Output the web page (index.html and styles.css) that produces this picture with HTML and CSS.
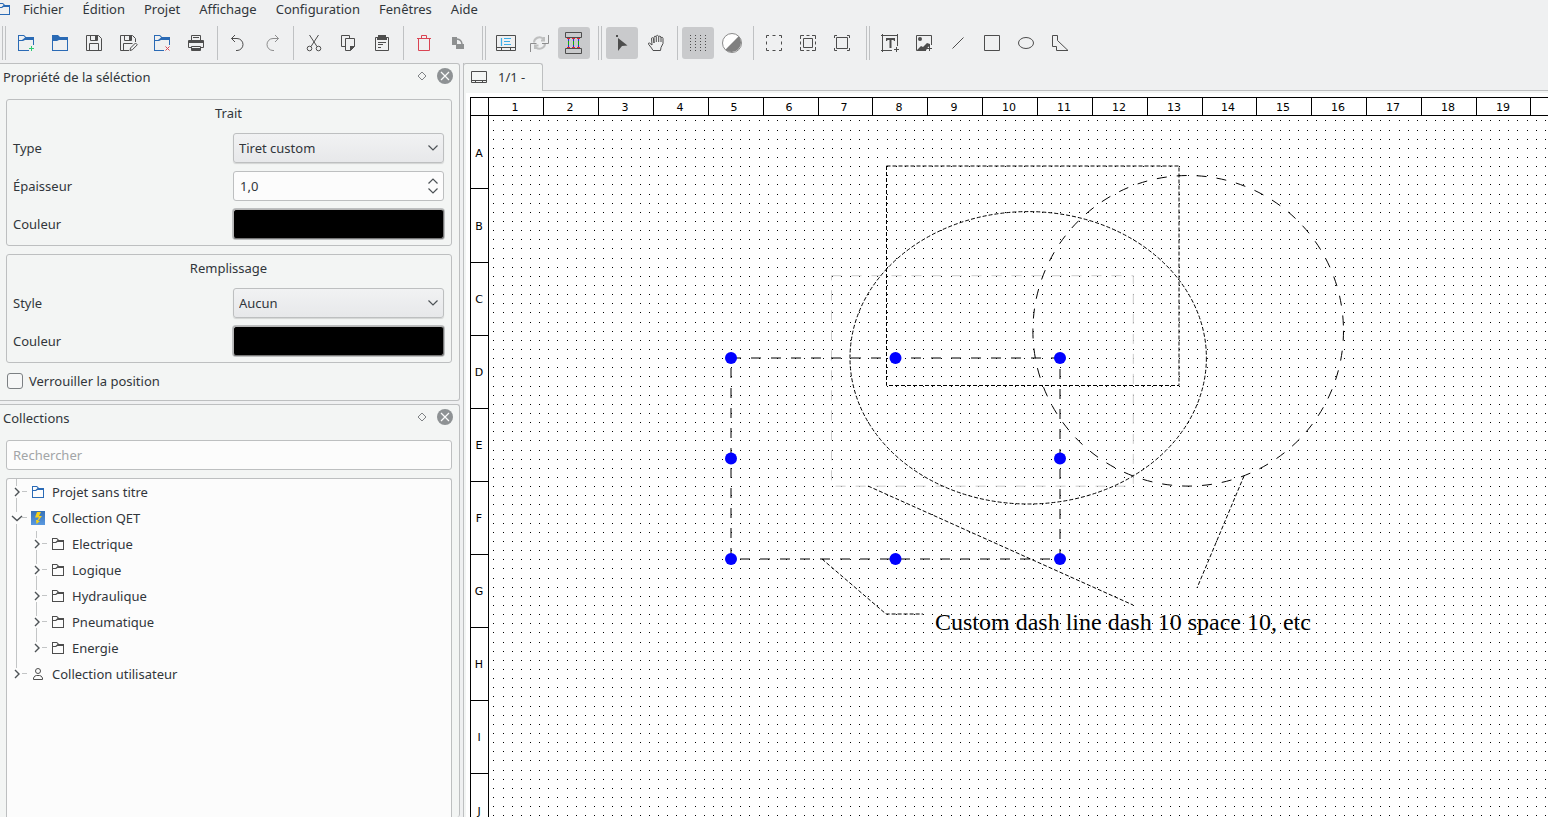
FILE: index.html
```html
<!DOCTYPE html>
<html lang="fr">
<head>
<meta charset="utf-8">
<title>QElectroTech</title>
<link rel="stylesheet" href="styles.css">
</head>
<body>
<svg class="defs" aria-hidden="true">
  <symbol id="folder16" viewBox="0 0 16 16"><path fill="currentColor" fill-rule="evenodd" d="M2 2v12h12V4H9L7 2zM3 3h3.600l1 1L5.500 6H3zM3 7h3l1.500-1H13v7H3z"/></symbol>
  <symbol id="fold-r" viewBox="0 0 20 26"><path d="M8 9l4 4-4 4" fill="none" stroke="#4d5256" stroke-width="1.400"/></symbol>
  <symbol id="fold-d" viewBox="0 0 20 26"><path d="M5 11l5 4.500 5-4.500" fill="none" stroke="#4d5256" stroke-width="1.400"/></symbol>
  <symbol id="branch" viewBox="0 0 20 26"><path d="M9.500 0v7M9.500 19v7M15 12.500h5" fill="none" stroke="#c3c5c6"/></symbol>
  <symbol id="branch-end" viewBox="0 0 20 26"><path d="M9.500 0v7M15 12.500h5" fill="none" stroke="#c3c5c6"/></symbol>
  <symbol id="chevron" viewBox="0 0 10 6"><path d="M.5.5L5 5 9.500.5" fill="none" stroke="#4d5256" stroke-width="1.200"/></symbol>
  <symbol id="float" viewBox="0 0 16 16"><path d="M8 4l4 4-4 4-4-4z" fill="none" stroke="#808386"/></symbol>
  <symbol id="close" viewBox="0 0 16 16"><circle cx="8" cy="8" r="8" fill="#8e9294"/><path d="M4 4l8 8M12 4l-8 8" stroke="#fcfcfc" stroke-width="1.200"/></symbol>
</svg>

<header>
  <nav class="menubar">
    <svg class="i16 blue app-icon"><use href="#folder16"/></svg>
    <button>Fichier</button><button>Édition</button><button>Projet</button><button>Affichage</button><button>Configuration</button><button>Fenêtres</button><button>Aide</button>
  </nav>
  <div class="toolbar" role="toolbar">
    <span class="grip"></span>
    <button aria-label="Nouveau"><svg viewBox="0 0 22 22"><path fill="#2a6ab5" fill-rule="evenodd" d="M3 3v16h11v-1H4V9h4l2-1h8v5h1V5h-8L9 3zM4 4h4.600l1.500 1.500L7 8H4z"/><path d="M16.500 14v5M14 16.500h5" stroke="#2ecc71"/></svg></button>
    <button aria-label="Ouvrir"><svg viewBox="0 0 22 22"><path fill="#2a6ab5" fill-rule="evenodd" d="M3 3v16h16V5h-8L9 3zM4 9h4l2-1h8v10H4z"/></svg></button>
    <button aria-label="Enregistrer"><svg viewBox="0 0 22 22"><path class="ln" d="M3.500 3.500h12l3 3v12h-15zM7.500 3.500v5h7v-5M6.500 18.500v-7h9v7"/><path class="fl" d="M12 4h2v4h-2z"/></svg></button>
    <button aria-label="Enregistrer sous"><svg viewBox="0 0 22 22"><path class="ln" d="M12 18.500H3.500v-15h12l3 3V10M7.500 3.500v5h7v-5M6.500 18.500v-7h9"/><path class="fl" d="M12 4h2v4h-2z"/><path class="ln" d="M13 18.500l.5-2.500 5-5 1.800 1.800-5 5z"/></svg></button>
    <button aria-label="Fermer"><svg viewBox="0 0 22 22"><path fill="#2a6ab5" fill-rule="evenodd" d="M3 3v16h10v-1H4V9h4l2-1h8v5h1V5h-8L9 3zM4 4h4.600l1.500 1.500L7 8H4z"/><path d="M14.500 14.500l4 4M18.500 14.500l-4 4" stroke="#da4453"/></svg></button>
    <button aria-label="Imprimer"><svg viewBox="0 0 22 22"><path class="ln" d="M6.500 8V3.500h9V8M6 15.500H3.500v-7h15v7H16M6.500 14.500h9v4h-9zM8 5.500h6"/><path class="fl" d="M3 9h16v2H3zM7 16h8v3H7z"/></svg></button>
    <span class="sep"></span>
    <button aria-label="Annuler"><svg viewBox="0 0 22 22"><path class="ln" d="M8 3L4.500 6.500 8 10M4.500 6.500h5.500a6 6 0 0 1 0 12H9"/></svg></button>
    <button class="off" aria-label="Refaire" disabled><svg viewBox="0 0 22 22"><path class="ln" d="M14 3l3.500 3.500L14 10M17.500 6.500H12a6 6 0 0 0 0 12h1"/></svg></button>
    <span class="sep"></span>
    <button aria-label="Couper"><svg viewBox="0 0 22 22"><path class="ln" d="M6.500 3l7.500 11.500M15.500 3L8 14.500"/><circle class="ln" cx="6.500" cy="16.500" r="2.300"/><circle class="ln" cx="15.500" cy="16.500" r="2.300"/></svg></button>
    <button aria-label="Copier"><svg viewBox="0 0 22 22"><path class="ln" d="M8 14.500H4.500v-11h8V6M8.500 6.500h9v8l-4 4h-5z"/><path class="fl" d="M13 14h5l-5 5z"/></svg></button>
    <button aria-label="Coller"><svg viewBox="0 0 22 22"><path class="ln" d="M4.500 5.500h13v13h-13zM7 10.500h8M7 12.500h5M7 15.500h3"/><path class="fl" d="M6 5h1V3h8v2h1v3H6z"/></svg></button>
    <span class="sep"></span>
    <button aria-label="Supprimer"><svg viewBox="0 0 22 22"><path d="M5.500 7v11.500h11V7M4 6.500h14M8.500 6V3.500h5V6" fill="none" stroke="#da4453"/></svg></button>
    <button aria-label="Pivoter" disabled><svg viewBox="0 0 22 22"><path fill="#8e9091" d="M5 5h5v8H5zM9 12h8v5H9z"/><path d="M10 7q4.500.5 5 5" fill="none" stroke="#8e9091" stroke-width="1.500"/></svg></button>
    <span class="grip"></span>
    <button aria-label="Cartouche"><svg viewBox="0 0 22 22"><path class="ln" d="M1.500 3.500h19v15h-19zM2 15.500h18M6.500 16v3M15.500 16v3"/><path d="M6.500 6v8M9 6.500h7M9 9.500h6M9 12.500h7" fill="none" stroke="#3daee9" stroke-width="1.200"/></svg></button>
    <button class="off" aria-label="Réinitialiser les conducteurs" disabled><svg viewBox="0 0 22 22"><path class="ln" d="M1.500 20v-8.500h6M13 11.500h6.500V3"/><path class="ln thick" d="M5 10.500a5.500 5.500 0 0 1 9-4l1 1.500M12 8.500h3V5M16 11a5.500 5.500 0 0 1-9 4.500l-1-1.500M9.500 13.500H6V17"/></svg></button>
    <button class="on" aria-label="Conducteurs automatiques" aria-pressed="true"><svg viewBox="0 0 22 22"><path class="ln" d="M2.500.5h16v5h-16zM2.500 16.500h16v5h-16z"/><path d="M5.500 6v10M10.500 6v10M15.500 6v10" stroke="#12a512"/><path d="M4 6.500h3M9 6.500h3M14 6.500h3M4 15.500h3M9 15.500h3M14 15.500h3" stroke="#e8262b"/><path d="M5.500 7v2M10.500 7v2M15.500 7v2M5.500 13v2M10.500 13v2M15.500 13v2" stroke="#2424e8"/></svg></button>
    <span class="grip"></span>
    <button class="on" aria-label="Sélection" aria-pressed="true"><svg viewBox="0 0 22 22"><path class="fl" d="M7 6l9.500 7.500-5.500.5-4 5zM5 3h2v2H5z"/></svg></button>
    <button aria-label="Déplacer"><svg viewBox="0 0 22 22"><path class="ln" d="M8 18.500h7.500l.5-3 2-4V6.500q-.2-1.500-1.500-1.200L16 6V5q-1-1.500-2.500-.5V4q-1-1.300-2.300 0v.5Q9.500 3.700 9 5v6L8.500 6.500Q7.500 5 6.500 6.200L7 13 4.500 11Q3 10.800 3.500 12.200L6.500 16zM11.300 5v5M13.700 5v5M16 6v4"/></svg></button>
    <span class="sep"></span>
    <button class="on" aria-label="Grille" aria-pressed="true"><svg viewBox="0 0 22 22"><path d="M3.500 3v16M8.500 3v16M13.500 3v16M18.500 3v16" stroke="#4d4d4d" stroke-dasharray="1 2"/></svg></button>
    <button aria-label="Couleur de fond"><svg viewBox="0 0 22 22"><circle cx="11" cy="11" r="9.500" fill="#fff" stroke="#8a8a8a"/><path d="M17.700 4.300A9.500 9.500 0 0 1 4.300 17.700z" fill="#808080"/></svg></button>
    <span class="sep"></span>
    <button aria-label="Zoom contenu"><svg viewBox="0 0 22 22"><path class="ln" d="M3.500 6V3.500H6M16 3.500h2.500V6M18.500 16v2.500H16M6 18.500H3.500V16M9.500 3.500h3M9.500 18.500h3M3.500 9.500v3M18.500 9.500v3"/></svg></button>
    <button aria-label="Zoom adapté"><svg viewBox="0 0 22 22"><path class="ln" d="M3.500 7V3.500H7M15 3.500h3.500V7M18.500 15v3.500H15M7 18.500H3.500V15M9.500 3.500h3M9.500 18.500h3M3.500 9.500v3M18.500 9.500v3M6.500 6.500h9v9h-9z"/></svg></button>
    <button aria-label="Zoom original"><svg viewBox="0 0 22 22"><path class="ln" d="M3.500 6V3.500H6M16 3.500h2.500V6M18.500 16v2.500H16M6 18.500H3.500V16M5.500 5.500h11v11h-11z"/></svg></button>
    <span class="grip"></span>
    <button aria-label="Champ de texte"><svg viewBox="0 0 22 22"><path class="ln" d="M2 3.500h17M3.500 2v18M2 18.500h11M18.500 2v12M17.500 15v5M15 17.500h5"/><path class="fl" d="M7 6h9v3h-1l-.5-1H12.500v8h-2V8H8.500L8 9H7z"/></svg></button>
    <button aria-label="Image"><svg viewBox="0 0 22 22"><path class="ln" d="M13 18.500H3.500v-15h15V13M16.500 14v5M14 16.500h5"/><circle class="fl" cx="7" cy="7" r="2"/><path class="fl" d="M4 18l3-3 1-1 2 1 4-4 3 1v2l-2 1-1 2-2 2H4z"/></svg></button>
    <button aria-label="Ligne"><svg viewBox="0 0 22 22"><path class="ln" d="M5.500 16.500l11-11"/></svg></button>
    <button aria-label="Rectangle"><svg viewBox="0 0 22 22"><path class="ln" d="M3.500 3.500h15v15h-15z"/></svg></button>
    <button aria-label="Ellipse"><svg viewBox="0 0 22 22"><ellipse class="ln" cx="11" cy="11" rx="7.500" ry="5.500"/></svg></button>
    <button aria-label="Polygone"><svg viewBox="0 0 22 22"><path class="ln" d="M3.500 3.500h5v5l10.500 10H7.500v-4h-4z"/></svg></button>
  </div>
</header>

<main>
  <aside class="docks">
    <section class="dock">
      <div class="dock-title"><h2>Propriété de la séléction</h2><button aria-label="Détacher"><svg class="i16"><use href="#float"/></svg></button><button aria-label="Fermer"><svg class="i16"><use href="#close"/></svg></button></div>
      <fieldset class="group">
        <h3>Trait</h3>
        <div class="row"><label for="type">Type</label><span class="field"><select id="type"><option>Tiret custom</option></select><svg class="chev"><use href="#chevron"/></svg></span></div>
        <div class="row"><label for="width">Épaisseur</label><span class="field"><input id="width" type="text" value="1,0"><span class="spin"><button aria-label="Augmenter"><svg class="up"><use href="#chevron"/></svg></button><button aria-label="Diminuer"><svg><use href="#chevron"/></svg></button></span></span></div>
        <div class="row"><label for="pen">Couleur</label><button id="pen" class="color"></button></div>
      </fieldset>
      <fieldset class="group">
        <h3>Remplissage</h3>
        <div class="row"><label for="style">Style</label><span class="field"><select id="style"><option>Aucun</option></select><svg class="chev"><use href="#chevron"/></svg></span></div>
        <div class="row"><label for="brush">Couleur</label><button id="brush" class="color"></button></div>
      </fieldset>
      <label class="lock"><input type="checkbox">Verrouiller la position</label>
    </section>

    <section class="dock grow">
      <div class="dock-title"><h2>Collections</h2><button aria-label="Détacher"><svg class="i16"><use href="#float"/></svg></button><button aria-label="Fermer"><svg class="i16"><use href="#close"/></svg></button></div>
      <input class="search" type="text" placeholder="Rechercher" aria-label="Rechercher">
      <ul class="tree">
        <li><div class="node"><svg class="br"><use href="#branch"/><use href="#fold-r"/></svg><svg class="i16 blue"><use href="#folder16"/></svg>Projet sans titre</div></li>
        <li><div class="node"><svg class="br"><use href="#branch"/><use href="#fold-d"/></svg><svg class="i16" viewBox="0 0 16 16"><defs><linearGradient id="sky" x2="0" y2="1"><stop stop-color="#3570b8"/><stop offset="1" stop-color="#5b9ae0"/></linearGradient></defs><path fill="url(#sky)" d="M1 1h14v14H1z"/><path fill="#f7d117" d="M7 2h4L9 6h3l-4 5h2l-3.500 3L6 10h1.500L9 7.500H5z"/></svg>Collection QET</div>
          <ul>
            <li><div class="node"><svg class="br"><use href="#branch"/><use href="#fold-r"/></svg><svg class="i16"><use href="#folder16"/></svg>Electrique</div></li>
            <li><div class="node"><svg class="br"><use href="#branch"/><use href="#fold-r"/></svg><svg class="i16"><use href="#folder16"/></svg>Logique</div></li>
            <li><div class="node"><svg class="br"><use href="#branch"/><use href="#fold-r"/></svg><svg class="i16"><use href="#folder16"/></svg>Hydraulique</div></li>
            <li><div class="node"><svg class="br"><use href="#branch"/><use href="#fold-r"/></svg><svg class="i16"><use href="#folder16"/></svg>Pneumatique</div></li>
            <li><div class="node"><svg class="br"><use href="#branch-end"/><use href="#fold-r"/></svg><svg class="i16"><use href="#folder16"/></svg>Energie</div></li>
          </ul>
        </li>
        <li><div class="node"><svg class="br"><use href="#branch-end"/><use href="#fold-r"/></svg><svg class="i16" viewBox="0 0 16 16"><circle class="ln" cx="8" cy="5" r="2.500"/><path class="ln" d="M3.500 13.500V12q1-2.500 3-2.500h3q2 0 3 2.500v1.500z"/></svg>Collection utilisateur</div></li>
      </ul>
    </section>
  </aside>

  <section class="editor">
    <div class="tabs">
      <button class="tab"><svg class="i16" viewBox="0 0 16 16"><path class="ln" d="M.5 2.500h15v11H.5zM1 11.500h14M4.500 12v2M11.500 12v2"/></svg>1/1 -</button>
      <span class="tab-line"></span>
    </div>
    <div class="view">
      <svg class="sheet" role="img" aria-label="Folio">
        <defs>
          <pattern id="dots" x="493" y="120" width="64" height="64" patternUnits="userSpaceOnUse">
            <path stroke="#000" stroke-width="1" shape-rendering="crispEdges" d="M0 .5h1m9 0h1m8 0h1m8 0h1m8 0h1m8 0h1m8 0h1M0 10.500h1m9 0h1m8 0h1m8 0h1m8 0h1m8 0h1m8 0h1M0 19.500h1m9 0h1m8 0h1m8 0h1m8 0h1m8 0h1m8 0h1M0 28.500h1m9 0h1m8 0h1m8 0h1m8 0h1m8 0h1m8 0h1M0 37.500h1m9 0h1m8 0h1m8 0h1m8 0h1m8 0h1m8 0h1M0 46.500h1m9 0h1m8 0h1m8 0h1m8 0h1m8 0h1m8 0h1M0 55.500h1m9 0h1m8 0h1m8 0h1m8 0h1m8 0h1m8 0h1"/>
          </pattern>
        </defs>
        <g transform="translate(-466 -93)">
          <rect x="490" y="117" width="100%" height="100%" fill="url(#dots)"/>
          <path class="rule" d="M470 97.500H4000M470 115.500H4000M470.500 97V3000M488.500 97V3000M543.500 97v18M598.500 97v18M653.500 97v18M708.500 97v18M763.500 97v18M818.500 97v18M872.500 97v18M927.500 97v18M982.500 97v18M1037.500 97v18M1092.500 97v18M1147.500 97v18M1202.500 97v18M1256.500 97v18M1311.500 97v18M1366.500 97v18M1421.500 97v18M1476.500 97v18M1530.500 97v18M470 188.500h18M470 262.500h18M470 335.500h18M470 408.500h18M470 481.500h18M470 554.500h18M470 627.500h18M470 700.500h18M470 773.500h18"/>
          <g class="mark">
            <text x="515" y="111">1</text><text x="570" y="111">2</text><text x="625" y="111">3</text><text x="680" y="111">4</text><text x="734" y="111">5</text><text x="789" y="111">6</text><text x="844" y="111">7</text><text x="899" y="111">8</text><text x="954" y="111">9</text><text x="1009" y="111">10</text><text x="1064" y="111">11</text><text x="1119" y="111">12</text><text x="1174" y="111">13</text><text x="1228" y="111">14</text><text x="1283" y="111">15</text><text x="1338" y="111">16</text><text x="1393" y="111">17</text><text x="1448" y="111">18</text><text x="1503" y="111">19</text>
            <text x="479" y="157">A</text><text x="479" y="230">B</text><text x="479" y="303">C</text><text x="479" y="376">D</text><text x="479" y="449">E</text><text x="479" y="522">F</text><text x="479" y="595">G</text><text x="479" y="668">H</text><text x="479" y="741">I</text><text x="479" y="815">J</text>
          </g>
          <path class="wide faint" d="M831.500 275.700H1133.300V486.200H831.500z"/>
          <path class="fine" d="M886.500 166H1179V385.500H886.500z"/>
          <ellipse class="fine" cx="1028.200" cy="357.800" rx="178.200" ry="146.200"/>
          <circle class="wide" cx="1188.200" cy="330.800" r="155.300"/>
          <path class="fine" d="M868 486L1133 605M1244 476L1197 588M822 559L886 614H923"/>
          <path class="wide" d="M731 358H1060V559H731z"/>
          <g fill="#00f"><circle cx="731" cy="358" r="6"/><circle cx="895.500" cy="358" r="6"/><circle cx="1060" cy="358" r="6"/><circle cx="731" cy="458.500" r="6"/><circle cx="1060" cy="458.500" r="6"/><circle cx="731" cy="559" r="6"/><circle cx="895.500" cy="559" r="6"/><circle cx="1060" cy="559" r="6"/></g>
          <text class="note" x="935" y="630">Custom dash line dash 10 space 10, etc</text>
        </g>
      </svg>
    </div>
  </section>
</main>
</body>
</html>
```
FILE: styles.css
```css
* { box-sizing: border-box; }

html, body { height: 100%; margin: 0; }

body {
  display: flex;
  flex-direction: column;
  overflow: hidden;
  background: #eff0f1;
  color: #31363b;
  font: 13px/18px "Noto Sans", sans-serif;
}

button, input, select { font: inherit; color: inherit; }

button { border: 0; padding: 0; background: none; }

svg { display: block; flex: none; }
.defs { position: absolute; width: 0; height: 0; }
.i16 { width: 16px; height: 16px; color: #4d4d4d; }
.blue { color: #2a6ab5; }
.ln { fill: none; stroke: #4d4d4d; }
.fl { fill: #4d4d4d; }
.thick { stroke-width: 2px; opacity: .5; }

/* Menus and tools */
.menubar { display: flex; align-items: center; gap: 19px; height: 20px; padding-bottom: 2px; }
.app-icon { margin: 0 -8px 0 -4px; }

.toolbar { display: flex; align-items: center; gap: 2px; height: 43px; padding: 3px 0 0 2px; }
.toolbar button { display: grid; place-items: center; flex: none; width: 32px; height: 32px; border-radius: 3px; }
.toolbar button.on { background: #c9cacc; }
.toolbar button.off svg { opacity: .6; }
.toolbar svg { width: 22px; height: 22px; }
.sep { width: 1px; height: 34px; margin: 0 2px 0 3px; background: #bfc1c3; }
.grip { width: 4px; height: 34px; margin: 0 2px 0 6px; border: solid #bfc1c3; border-width: 0 1px; }
.grip:first-child { margin-left: 0; }

/* Side docks */
main { display: flex; flex: 1; gap: 3px; min-height: 0; }
.docks { display: flex; flex-direction: column; gap: 3px; flex: 0 0 460px; min-height: 0; }
.dock {
  padding: 0 7px 0 6px;
  border: 1px solid #bdbfc0;
  border-left: 0;
  border-radius: 0 3px 3px 0;
  background: #f3f5f4;
}
.dock.grow { display: flex; flex-direction: column; flex: 1; min-height: 0; border-bottom: 0; }
.dock-title { display: flex; gap: 7px; height: 35px; margin: 0 -1px 0 -3px; padding-top: 4px; }
.dock-title h2 { flex: 1; margin: 0; font-size: 13px; font-weight: 400; line-height: 18px; }
.dock-title button { height: 16px; }

.group {
  display: flex;
  flex-direction: column;
  gap: 8px;
  margin: 0 0 8px;
  padding: 4px 7px 6px 6px;
  border: 1px solid #bdbfc0;
  border-radius: 3px;
}
.group h3 { margin: 0 0 3px; font-size: 13px; font-weight: 400; line-height: 18px; text-align: center; }
.row { display: flex; align-items: center; justify-content: space-between; }
.field { position: relative; width: 211px; }
.field select, .field input, .search {
  display: block;
  width: 100%;
  height: 30px;
  padding: 0 6px;
  border: 1px solid #bdbfc0;
  border-radius: 3px;
  background: #fcfcfc;
}
.field select {
  appearance: none;
  padding: 0 5px;
  background: linear-gradient(#f1f2f3, #e7e8ea);
  box-shadow: 0 1px 1px #0002;
}
.chev { position: absolute; right: 6px; top: 12px; width: 10px; height: 6px; pointer-events: none; }
.spin { position: absolute; right: 6px; top: 7px; display: grid; gap: 4px; }
.spin svg { width: 10px; height: 6px; }
.up { transform: rotate(180deg); }
.color {
  width: 211px;
  height: 30px;
  border: 1px solid;
  border-color: #b5b5b5 #777 #777 #b5b5b5;
  border-radius: 3px;
  background: #000;
  box-shadow: 0 0 0 1px #bdbfc0;
}
.lock { display: flex; align-items: center; gap: 6px; margin: 9px 0 10px 1px; }
.lock input { appearance: none; width: 16px; height: 16px; margin: 0; border: 1px solid #7c8083; border-radius: 3px; background: #f6f7f7; }

.search { flex: none; margin-bottom: 8px; }
.search::placeholder { color: #a2a5a7; opacity: 1; }

.tree { flex: 1; min-height: 0; border: 1px solid #bdbfc0; border-bottom: 0; border-radius: 3px 3px 0 0; background: #fcfcfc; }
.tree, .tree ul { margin: 0; padding: 0; list-style: none; }
.tree ul { margin-left: 9px; padding-left: 10px; border-left: 1px solid #c3c5c6; }
.node { display: flex; align-items: center; height: 26px; }
.br { width: 20px; height: 26px; margin-right: 3px; }
.node .i16 { margin-right: 6px; }

/* Folio editor */
.editor { display: flex; flex-direction: column; flex: 1; min-width: 0; border-left: 1px solid #bdbfc0; }
.tabs { display: flex; height: 28px; }
.tab {
  display: flex;
  align-items: center;
  gap: 11px;
  margin-left: -1px;
  padding: 0 17px 1px 7px;
  border: 1px solid #bdbfc0;
  border-bottom: 0;
  border-radius: 3px 3px 0 0;
  background: #f3f5f4;
}
.tab-line { flex: 1; border-bottom: 1px solid #bdbfc0; }
.view { flex: 1; min-height: 0; padding: 2px 0 0 2px; background: #f3f5f4; }
.sheet { width: 100%; height: 100%; background: #fff; }
.rule { fill: none; stroke: #000; shape-rendering: crispEdges; }
.mark { font: 11px "DejaVu Sans", sans-serif; text-anchor: middle; }
.fine { fill: none; stroke: #000; stroke-dasharray: 4 2; }
.wide { fill: none; stroke: #000; stroke-dasharray: 10 10; }
.faint { stroke: #ccc; }
.note { font: 24px "Liberation Serif", serif; }
```
